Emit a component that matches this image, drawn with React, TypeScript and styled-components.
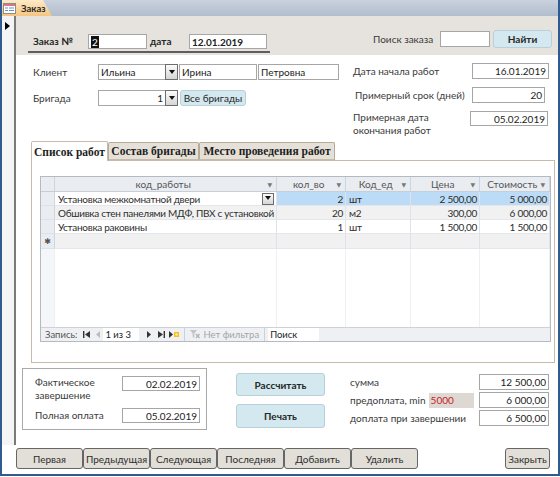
import React from "react";
import styled, { createGlobalStyle } from "styled-components";

const Global = createGlobalStyle`
  html, body { margin: 0; padding: 0; background: #fff; }
  body { font-family: Lato, "Open Sans", "DejaVu Sans", sans-serif; font-size: 10px; color: #3a3a3a; }
  * { box-sizing: border-box; }
`;

const COLS = "14px 222px 69px 65px 69px 70px";

const Window = styled.div`
  width: 560px;
  height: 476px;
  border: 2px solid #2f5b8e;
  border-top: none;
  display: flex;
  flex-direction: column;
  background: #fff;
  overflow: hidden;
`;

const TabStrip = styled.div`
  height: 16px;
  flex-shrink: 0;
  background: linear-gradient(#c9d2de, #b2bdcc);
  display: flex;
  align-items: stretch;
`;

const DocTab = styled.div`
  width: 50px;
  display: flex;
  align-items: center;
  gap: 5px;
  padding-left: 1px;
  background: linear-gradient(#fdebc9, #f5c580);
  clip-path: polygon(0 0, 41px 0, 50px 100%, 0 100%);
  font-weight: 700;
  font-size: 9.5px;
  color: #2a2a2a;
`;

const Body = styled.div`
  height: 429px;
  display: flex;
  flex-shrink: 0;
`;

const RecordSelector = styled.div`
  width: 14px;
  flex-shrink: 0;
  background: #f4f4f4;
  border-right: 2px solid #7a7a7a;
  padding: 4px 0 0 3px;
`;

const FormArea = styled.div`
  flex: 1;
  display: flex;
  flex-direction: column;
`;

const FormHeader = styled.div`
  height: 39px;
  flex-shrink: 0;
  background: #e6e3de;
  display: flex;
  align-items: flex-start;
  padding: 14px 6px 0 12px;
`;

const OrderGroup = styled.div`
  width: 242px;
  margin-top: 4px;
  padding: 0 0 2px 5px;
  border-bottom: 2px solid #5e5e5e;
  display: flex;
  align-items: center;
`;

const SearchGroup = styled.div`
  margin-left: auto;
  display: flex;
  align-items: center;
  height: 18px;
`;

const Label = styled.span<{ $w?: number; $ml?: number; $bold?: boolean }>`
  display: inline-block;
  flex-shrink: 0;
  width: ${(p) => (p.$w ? `${p.$w}px` : "auto")};
  margin-left: ${(p) => p.$ml ?? 0}px;
  font-weight: ${(p) => (p.$bold ? 700 : 400)};
  color: ${(p) => (p.$bold ? "#262626" : "#3a3a3a")};
  white-space: nowrap;
  line-height: 13px;
`;

const WrapLabel = styled.span<{ $w: number }>`
  display: block;
  width: ${(p) => p.$w}px;
  line-height: 13px;
  color: #3a3a3a;
`;

const Field = styled.div<{
  $w: number;
  $h?: number;
  $right?: boolean;
  $bold?: boolean;
  $ml?: number;
  $mr?: number;
}>`
  width: ${(p) => p.$w}px;
  height: ${(p) => p.$h ?? 16}px;
  flex-shrink: 0;
  border: 1px solid #a6a6a6;
  background: #fff;
  display: flex;
  align-items: center;
  justify-content: ${(p) => (p.$right ? "flex-end" : "flex-start")};
  padding: 0 2px;
  margin-left: ${(p) => p.$ml ?? 0}px;
  margin-right: ${(p) => p.$mr ?? 0}px;
  font-weight: ${(p) => (p.$bold ? 700 : 400)};
  color: #222;
  white-space: nowrap;
  overflow: hidden;
`;

const Selected = styled.span`
  background: #111;
  color: #fff;
  padding: 0 1px;
  line-height: 12px;
`;

const BlueButton = styled.div<{ $w: number; $h: number; $bold?: boolean; $ml?: number }>`
  width: ${(p) => p.$w}px;
  height: ${(p) => p.$h}px;
  margin-left: ${(p) => p.$ml ?? 0}px;
  flex-shrink: 0;
  background: #d3e8ef;
  border: 1px solid #b7d0d9;
  border-radius: 3px;
  display: flex;
  align-items: center;
  justify-content: center;
  white-space: nowrap;
  font-weight: ${(p) => (p.$bold ? 700 : 400)};
  color: #262626;
`;

const Detail = styled.div`
  flex: 1;
  display: flex;
  flex-direction: column;
`;

const TopFields = styled.div`
  height: 86px;
  flex-shrink: 0;
  display: flex;
  padding: 8px 0 0 17px;
`;

const LeftFields = styled.div`
  width: 320px;
  display: flex;
  flex-direction: column;
  gap: 10px;
  padding-top: 1px;
`;

const RightFields = styled.div`
  width: 196px;
  display: flex;
  flex-direction: column;
`;

const FieldRow = styled.div<{ $mt?: number; $top?: boolean }>`
  display: flex;
  align-items: ${(p) => (p.$top ? "flex-start" : "center")};
  margin-top: ${(p) => p.$mt ?? 0}px;
`;

const SpreadRow = styled.div<{ $mt?: number }>`
  display: flex;
  align-items: center;
  justify-content: space-between;
  margin-top: ${(p) => p.$mt ?? 0}px;
`;

const Combo = styled.div<{ $w: number }>`
  width: ${(p) => p.$w}px;
  height: 16px;
  flex-shrink: 0;
  display: flex;
  border: 1px solid #a6a6a6;
  background: #fff;
`;

const ComboValue = styled.div<{ $right?: boolean }>`
  flex: 1;
  display: flex;
  align-items: center;
  justify-content: ${(p) => (p.$right ? "flex-end" : "flex-start")};
  padding: 0 2px;
  color: #222;
`;

const DropBtn = styled.div`
  width: 13px;
  margin: -1px -1px -1px 0;
  border: 1px solid #6d6d6d;
  background: linear-gradient(#fbfbfb, #d6d6d6);
  display: flex;
  align-items: center;
  justify-content: center;
`;

const TabControl = styled.div`
  margin: 0 3px 0 15px;
  display: flex;
  flex-direction: column;
  flex-shrink: 0;
`;

const TabHeads = styled.div`
  display: flex;
  align-items: flex-end;
  height: 19px;
  position: relative;
  z-index: 1;
`;

const TabHead = styled.div<{ $w: number; $active?: boolean }>`
  width: ${(p) => p.$w}px;
  height: ${(p) => (p.$active ? 20 : 18)}px;
  margin-bottom: ${(p) => (p.$active ? -1 : 0)}px;
  background: ${(p) => (p.$active ? "#fff" : "#e6e1d8")};
  border: 1px solid ${(p) => (p.$active ? "#c6bba8" : "#b6ab98")};
  border-bottom: ${(p) => (p.$active ? "none" : "1px solid #c6bba8")};
  border-radius: 2px 2px 0 0;
  display: flex;
  align-items: center;
  justify-content: center;
  font-family: "Liberation Serif", "DejaVu Serif", serif;
  font-weight: 700;
  font-size: 11.5px;
  color: #1e1e1e;
  white-space: nowrap;
`;

const TabPage = styled.div`
  height: 203px;
  border: 1px solid #c6bba8;
  padding: 15px 0 0 8px;
`;

const Sheet = styled.div`
  width: 511px;
  height: 166px;
  border: 1px solid #b4bac2;
  display: flex;
  flex-direction: column;
  background: #fff;
`;

const SheetRow = styled.div<{ $h?: number }>`
  display: grid;
  grid-template-columns: ${COLS};
  height: ${(p) => p.$h ?? 14}px;
  flex-shrink: 0;
`;

const FillRow = styled.div`
  display: grid;
  grid-template-columns: ${COLS};
  flex: 1;
`;

const HeadCell = styled.div`
  background: #e9edf2;
  border-right: 1px solid #cfd5dc;
  border-bottom: 1px solid #c8ced6;
  display: flex;
  align-items: center;
  padding: 0 4px;
  color: #555;
  white-space: nowrap;
`;

const HeadText = styled.span`
  flex: 1;
  text-align: center;
`;

const HeadArrow = styled.span`
  font-size: 6px;
  color: #777;
`;

const SelCell = styled.div`
  background: #e9edf2;
  border-right: 1px solid #cfd5dc;
  border-bottom: 1px solid #dde2e8;
  display: flex;
  align-items: center;
  justify-content: center;
  font-size: 8px;
  color: #555;
`;

const Cell = styled.div<{ $bg?: string; $right?: boolean }>`
  background: ${(p) => p.$bg ?? "#fff"};
  border-right: 1px solid #dfe3e8;
  border-bottom: 1px solid #e3e6ea;
  display: flex;
  align-items: center;
  justify-content: ${(p) => (p.$right ? "flex-end" : "flex-start")};
  padding: 0 2px 0 3px;
  letter-spacing: -0.28px;
  color: #2e2e2e;
  white-space: nowrap;
  overflow: hidden;
`;

const FillCell = styled.div<{ $sel?: boolean }>`
  background: ${(p) => (p.$sel ? "#f4f6f9" : "#fff")};
  border-right: 1px solid #eef0f3;
`;

const CellDrop = styled.div`
  width: 12px;
  height: 12px;
  margin-left: auto;
  margin-right: 0;
  border: 1px solid #6d6d6d;
  background: linear-gradient(#fbfbfb, #d6d6d6);
  display: flex;
  align-items: center;
  justify-content: center;
  flex-shrink: 0;
`;

const NavBar = styled.div`
  height: 14px;
  flex-shrink: 0;
  background: #eef0f3;
  border-top: 1px solid #cdd2d9;
  display: flex;
  align-items: center;
  font-size: 9.5px;
  color: #555;
  padding-left: 4px;
`;

const NavIcon = styled.span<{ $ml?: number }>`
  display: inline-flex;
  margin-left: ${(p) => p.$ml ?? 0}px;
`;

const NavBox = styled.div<{ $w: number; $ml?: number }>`
  width: ${(p) => p.$w}px;
  height: 13px;
  margin-left: ${(p) => p.$ml ?? 0}px;
  background: #fff;
  display: flex;
  align-items: center;
  padding: 0 2px;
  color: #1e1e1e;
`;

const NavSep = styled.div<{ $ml?: number }>`
  width: 1px;
  height: 13px;
  background: #cdd2d9;
  margin-left: ${(p) => p.$ml ?? 0}px;
`;

const Faded = styled.span`
  color: #a5a5a5;
  margin-left: 3px;
`;

const BottomArea = styled.div`
  display: flex;
  margin-top: 5px;
  padding-left: 6px;
`;

const GroupBox = styled.div`
  width: 185px;
  height: 62px;
  border: 1px solid #a9a9a9;
  padding: 7px 0 0 12px;
  display: flex;
  flex-direction: column;
`;

const ButtonCol = styled.div`
  margin-left: 29px;
  margin-top: 5px;
  display: flex;
  flex-direction: column;
  gap: 8px;
`;

const Totals = styled.div`
  margin-left: 25px;
  margin-top: 6px;
  width: 199px;
  display: flex;
  flex-direction: column;
  gap: 2px;
`;

const MinValue = styled.span`
  display: inline-block;
  width: 45px;
  margin-left: 3px;
  background: #ddd8d1;
  color: #c8202a;
  padding-left: 2px;
  line-height: 15px;
`;

const Footer = styled.div`
  flex: 1;
  display: flex;
  align-items: flex-start;
  padding: 3px 8px 0 14px;
`;

const NavButton = styled.div<{ $w: number; $push?: boolean }>`
  width: ${(p) => p.$w}px;
  height: 21px;
  margin-left: ${(p) => (p.$push ? "auto" : "0")};
  background: #e2ded8;
  border: 1px solid #666;
  border-radius: 3px;
  display: flex;
  align-items: center;
  justify-content: center;
  color: #2e2e2e;
  flex-shrink: 0;
`;

const Tri = ({ color = "#111" }: { color?: string }) => (
  <svg width="6" height="5" viewBox="0 0 6 5">
    <polygon points="0,0 6,0 3,4" fill={color} />
  </svg>
);

const FormIcon = () => (
  <svg width="13" height="11" viewBox="0 0 13 11">
    <rect x="0.5" y="0.5" width="12" height="10" fill="#fff" stroke="#8c8c8c" />
    <rect x="1" y="1" width="11" height="2" fill="#d9748a" />
    <rect x="2" y="4.5" width="3" height="1" fill="#6a8fc8" />
    <rect x="6" y="4.5" width="5" height="1" fill="#6a8fc8" />
    <rect x="2" y="7" width="3" height="1" fill="#6a8fc8" />
    <rect x="6" y="7" width="5" height="1" fill="#6a8fc8" />
  </svg>
);

const SelArrow = () => (
  <svg width="5" height="8" viewBox="0 0 5 8">
    <polygon points="0,0 5,4 0,8" fill="#000" />
  </svg>
);

const FirstIc = () => (
  <svg width="7" height="7" viewBox="0 0 7 7">
    <rect x="0" y="0" width="1.4" height="7" fill="#333" />
    <polygon points="7,0 2,3.5 7,7" fill="#333" />
  </svg>
);
const PrevIc = () => (
  <svg width="4" height="7" viewBox="0 0 4 7">
    <polygon points="4,0 0,3.5 4,7" fill="#bdbdbd" />
  </svg>
);
const NextIc = () => (
  <svg width="4" height="7" viewBox="0 0 4 7">
    <polygon points="0,0 4,3.5 0,7" fill="#333" />
  </svg>
);
const LastIc = () => (
  <svg width="7" height="7" viewBox="0 0 7 7">
    <polygon points="0,0 5,3.5 0,7" fill="#333" />
    <rect x="5.6" y="0" width="1.4" height="7" fill="#333" />
  </svg>
);
const NewIc = () => (
  <svg width="10" height="7" viewBox="0 0 10 7">
    <polygon points="0,0 4,3.5 0,7" fill="#333" />
    <rect x="5" y="1" width="5" height="5" fill="#f3c21b" />
    <rect x="6.5" y="2.5" width="2" height="2" fill="#fff3b0" />
  </svg>
);
const FilterIc = () => (
  <svg width="10" height="9" viewBox="0 0 10 9">
    <polygon points="0,0 7,0 4.3,3.5 4.3,8 2.7,7 2.7,3.5" fill="#c4c4c4" />
    <line x1="6" y1="4" x2="9.5" y2="8" stroke="#b0b0b0" strokeWidth="1.2" />
    <line x1="9.5" y1="4" x2="6" y2="8" stroke="#b0b0b0" strokeWidth="1.2" />
  </svg>
);

const heads = ["код_работы", "кол_во", "Код_ед", "Цена", "Стоимость"];

type Row = { code: string; qty: string; unit: string; price: string; cost: string; bg: string; current?: boolean };

const rows: Row[] = [
  { code: "Установка межкомнатной двери", qty: "2", unit: "шт", price: "2 500,00", cost: "5 000,00", bg: "#fff", current: true },
  { code: "Обшивка стен панелями МДФ, ПВХ с установкой", qty: "20", unit: "м2", price: "300,00", cost: "6 000,00", bg: "#f1f1f1" },
  { code: "Установка раковины", qty: "1", unit: "шт", price: "1 500,00", cost: "1 500,00", bg: "#fff" },
];

const footerButtons = ["Первая", "Предыдущая", "Следующая", "Последняя", "Добавить", "Удалить"];

export default function App() {
  return (
    <>
      <Global />
      <Window>
        <TabStrip>
          <DocTab>
            <FormIcon />
            Заказ
          </DocTab>
        </TabStrip>
        <Body>
          <RecordSelector>
            <SelArrow />
          </RecordSelector>
          <FormArea>
            <FormHeader>
              <OrderGroup>
                <Label $w={55} $bold>
                  Заказ №
                </Label>
                <Field $w={59} $h={15}>
                  <Selected>2</Selected>
                </Field>
                <Label $w={39} $ml={3} $bold>
                  дата
                </Label>
                <Field $w={78} $h={15} $bold>
                  12.01.2019
                </Field>
              </OrderGroup>
              <SearchGroup>
                <Label $w={67}>Поиск заказа</Label>
                <Field $w={50} $h={16} />
                <BlueButton $w={59} $h={18} $ml={3} $bold>
                  Найти
                </BlueButton>
              </SearchGroup>
            </FormHeader>
            <Detail>
              <TopFields>
                <LeftFields>
                  <FieldRow>
                    <Label $w={65}>Клиент</Label>
                    <Combo $w={80}>
                      <ComboValue>Ильина</ComboValue>
                      <DropBtn>
                        <Tri />
                      </DropBtn>
                    </Combo>
                    <Field $w={78} $ml={1}>
                      Ирина
                    </Field>
                    <Field $w={81} $ml={1}>
                      Петровна
                    </Field>
                  </FieldRow>
                  <FieldRow>
                    <Label $w={65}>Бригада</Label>
                    <Combo $w={80}>
                      <ComboValue $right>1</ComboValue>
                      <DropBtn>
                        <Tri />
                      </DropBtn>
                    </Combo>
                    <BlueButton $w={66} $h={16} $ml={2}>
                      Все бригады
                    </BlueButton>
                  </FieldRow>
                </LeftFields>
                <RightFields>
                  <SpreadRow>
                    <Label>Дата начала работ</Label>
                    <Field $w={77} $right>
                      16.01.2019
                    </Field>
                  </SpreadRow>
                  <SpreadRow $mt={8}>
                    <Label $ml={2}>Примерный срок (дней)</Label>
                    <Field $w={73} $mr={4} $right>
                      20
                    </Field>
                  </SpreadRow>
                  <FieldRow $mt={8} $top>
                    <WrapLabel $w={117}>
                      Примерная дата
                      <br />
                      окончания работ
                    </WrapLabel>
                    <Field $w={78} $h={15} $right>
                      05.02.2019
                    </Field>
                  </FieldRow>
                </RightFields>
              </TopFields>
              <TabControl>
                <TabHeads>
                  <TabHead $w={77} $active>
                    Список работ
                  </TabHead>
                  <TabHead $w={91}>Состав бригады</TabHead>
                  <TabHead $w={136}>Место проведения работ</TabHead>
                </TabHeads>
                <TabPage>
                  <Sheet>
                    <SheetRow $h={15}>
                      <HeadCell />
                      {heads.map((h) => (
                        <HeadCell key={h}>
                          <HeadText>{h}</HeadText>
                          <HeadArrow>▼</HeadArrow>
                        </HeadCell>
                      ))}
                    </SheetRow>
                    {rows.map((r) => {
                      const hl = r.current ? "#bcdbf6" : r.bg;
                      return (
                        <SheetRow key={r.code}>
                          <SelCell />
                          <Cell $bg={r.bg}>
                            {r.code}
                            {r.current && (
                              <CellDrop>
                                <Tri />
                              </CellDrop>
                            )}
                          </Cell>
                          <Cell $bg={hl} $right>
                            {r.qty}
                          </Cell>
                          <Cell $bg={hl}>{r.unit}</Cell>
                          <Cell $bg={hl} $right>
                            {r.price}
                          </Cell>
                          <Cell $bg={hl} $right>
                            {r.cost}
                          </Cell>
                        </SheetRow>
                      );
                    })}
                    <SheetRow $h={15}>
                      <SelCell>✱</SelCell>
                      <Cell $bg="#f1f1f1" />
                      <Cell $bg="#f1f1f1" />
                      <Cell $bg="#f1f1f1" />
                      <Cell $bg="#f1f1f1" />
                      <Cell $bg="#f1f1f1" />
                    </SheetRow>
                    <FillRow>
                      <FillCell $sel />
                      <FillCell />
                      <FillCell />
                      <FillCell />
                      <FillCell />
                      <FillCell />
                    </FillRow>
                    <NavBar>
                      <span>Запись:</span>
                      <NavIcon $ml={6}>
                        <FirstIc />
                      </NavIcon>
                      <NavIcon $ml={6}>
                        <PrevIc />
                      </NavIcon>
                      <NavBox $w={36} $ml={3}>
                        1 из 3
                      </NavBox>
                      <NavIcon $ml={8}>
                        <NextIc />
                      </NavIcon>
                      <NavIcon $ml={7}>
                        <LastIc />
                      </NavIcon>
                      <NavIcon $ml={4}>
                        <NewIc />
                      </NavIcon>
                      <NavSep $ml={5} />
                      <NavIcon $ml={5}>
                        <FilterIc />
                      </NavIcon>
                      <Faded>Нет фильтра</Faded>
                      <NavSep $ml={5} />
                      <NavBox $w={51} $ml={3}>
                        Поиск
                      </NavBox>
                    </NavBar>
                  </Sheet>
                </TabPage>
              </TabControl>
              <BottomArea>
                <GroupBox>
                  <FieldRow $top>
                    <WrapLabel $w={87}>
                      Фактическое
                      <br />
                      завершение
                    </WrapLabel>
                    <Field $w={78} $h={15} $right>
                      02.02.2019
                    </Field>
                  </FieldRow>
                  <FieldRow $mt={6}>
                    <Label $w={87}>Полная оплата</Label>
                    <Field $w={78} $h={15} $right>
                      05.02.2019
                    </Field>
                  </FieldRow>
                </GroupBox>
                <ButtonCol>
                  <BlueButton $w={89} $h={23} $bold>
                    Рассчитать
                  </BlueButton>
                  <BlueButton $w={89} $h={24} $bold>
                    Печать
                  </BlueButton>
                </ButtonCol>
                <Totals>
                  <SpreadRow>
                    <Label>сумма</Label>
                    <Field $w={70} $right>
                      12 500,00
                    </Field>
                  </SpreadRow>
                  <SpreadRow>
                    <Label>
                      предоплата, min<MinValue>5000</MinValue>
                    </Label>
                    <Field $w={70} $right>
                      6 000,00
                    </Field>
                  </SpreadRow>
                  <SpreadRow>
                    <Label>доплата при завершении</Label>
                    <Field $w={70} $right>
                      6 500,00
                    </Field>
                  </SpreadRow>
                </Totals>
              </BottomArea>
            </Detail>
          </FormArea>
        </Body>
        <Footer>
          {footerButtons.map((b) => (
            <NavButton key={b} $w={67}>
              {b}
            </NavButton>
          ))}
          <NavButton $w={45} $push>
            Закрыть
          </NavButton>
        </Footer>
      </Window>
    </>
  );
}
